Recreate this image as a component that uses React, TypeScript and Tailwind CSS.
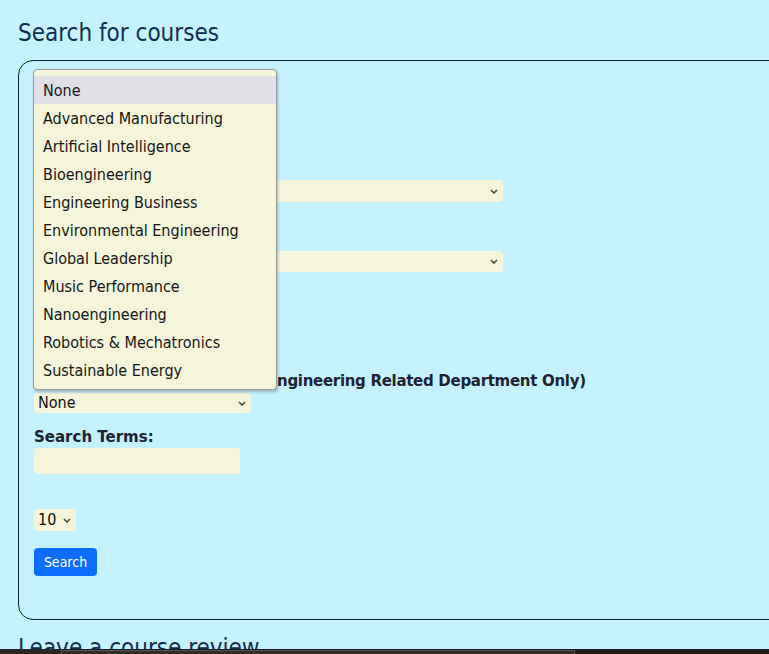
import React from 'react';

const minors = [
  'None',
  'Advanced Manufacturing',
  'Artificial Intelligence',
  'Bioengineering',
  'Engineering Business',
  'Environmental Engineering',
  'Global Leadership',
  'Music Performance',
  'Nanoengineering',
  'Robotics & Mechatronics',
  'Sustainable Energy',
];

const Chevron: React.FC = () => (
  <svg width="8" height="5" viewBox="0 0 8 5" className="shrink-0">
    <path d="M1 1 4 4 7 1" fill="none" stroke="#4a4a4a" strokeWidth="1.6" />
  </svg>
);

const FakeSelect: React.FC<{ value?: string; className: string }> = ({ value = '', className }) => (
  <div className={`flex items-center justify-between rounded-[4px] bg-[#f5f5dc] pl-[4px] pr-[5px] text-[16px] text-[#111] ${className}`}>
    <span>{value}</span>
    <Chevron />
  </div>
);

const Label: React.FC<{ children: React.ReactNode; className?: string }> = ({ children, className = '' }) => (
  <div className={`font-['DejaVu_Sans',sans-serif] text-[15px] font-bold leading-[20px] text-[#1d2330] whitespace-nowrap ${className}`}>
    {children}
  </div>
);

const App: React.FC = () => (
  <div className="relative h-[654px] w-full overflow-hidden bg-[#c6f1ff] font-['DejaVu_Sans_Condensed','DejaVu_Sans',sans-serif]">
    <div className="pl-[18px]">
      <h2 className="pt-[19px] text-[24px] leading-[29px] text-[#0f2f52]">Search for courses</h2>

      <div className="relative mt-[12px] h-[560px] w-[1000px] rounded-[15px] border border-[#0a2340] pl-[15px]">
        {/* form (upper part sits under the open list) */}
        <div className="flex flex-col">
          <Label className="mt-[23px]">Course Name:</Label>
          <div className="mt-[2px] h-[25px] w-[206px] rounded-[4px] bg-[#f5f5dc]" />
          <Label className="mt-[27px]">Department:</Label>
          <FakeSelect className="mt-[2px] h-[22px] w-[469px]" />
          <Label className="mt-[27px]">Quarter:</Label>
          <FakeSelect className="mt-[2px] h-[21px] w-[469px]" />
          <Label className="mt-[20px]">Level:</Label>
          <div className="mt-[4px] h-[20px] w-[180px]" />
          <Label className="mt-[35px] flex">
            <span className="inline-block w-[243px] overflow-hidden">Minor(s): (E</span>
            <span className="tracking-[-0.3px]">ngineering Related Department Only)</span>
          </Label>
          <FakeSelect value="None" className="mt-[2px] h-[20px] w-[217px]" />
          <Label className="mt-[14px]">Search Terms:</Label>
          <div className="mt-[1px] h-[26px] w-[206px] rounded-[4px] bg-[#f5f5dc]" />
          <FakeSelect value="10" className="mt-[35px] h-[22px] w-[42px]" />
          <button className="mt-[17px] h-[28px] w-[63px] rounded-[4px] bg-[#0d6efd] text-[14px] text-white">Search</button>
        </div>

        {/* open option list */}
        <div className="absolute left-[14px] top-[8px] w-[244px] rounded-[4px] border border-[#9a9a9a] bg-[#f5f5dc] pt-[6px] pb-[5px] shadow-[1px_2px_3px_rgba(0,0,0,0.25)]">
          {minors.map((m, i) => (
            <div
              key={m}
              className={`h-[28px] pl-[9px] text-[16px] leading-[30px] text-[#151515] ${i === 0 ? 'bg-[#e0e0e6]' : ''}`}
            >
              {m}
            </div>
          ))}
        </div>
      </div>

      <h2 className="mt-[14px] text-[24px] leading-[29px] text-[#0f2f52]">Leave a course review</h2>
    </div>

    {/* bottom scroll strip */}
    <div className="absolute bottom-0 left-0 h-[5px] w-full bg-[#1c1c1c]">
      <div className="absolute left-0 top-0 h-[5px] w-[61px] bg-[#262626]" />
      <div className="absolute left-[61px] top-[1px] h-[4px] w-[514px] border-t border-l border-r border-[#555] bg-[#2e2e2e]" />
    </div>
  </div>
);

export default App;
